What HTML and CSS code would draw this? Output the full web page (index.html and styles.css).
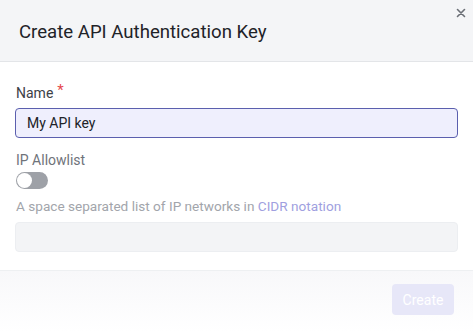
FILE: index.html
```html
<!DOCTYPE html>
<html>
<head>
<meta charset="utf-8">
<link rel="stylesheet" href="styles.css">
</head>
<body>
<div class="modal">
  <div class="modal-header">
    <h1 class="title">Create API Authentication Key</h1>
    <button class="close" aria-label="Close">
      <svg width="10" height="10" viewBox="0 0 10 10"><path d="M1.5 1.5L8.5 8.5M8.5 1.5L1.5 8.5" stroke="#6b6f76" stroke-width="1.6" stroke-linecap="round"/></svg>
    </button>
  </div>
  <div class="modal-body">
    <label class="label">Name<span class="req">*</span></label>
    <div class="input active">My API key</div>
    <label class="label muted">IP Allowlist</label>
    <div class="toggle"><span class="knob"></span></div>
    <p class="help">A space separated list of IP networks in <a class="link">CIDR notation</a></p>
    <div class="input disabled"></div>
  </div>
  <div class="modal-footer">
    <button class="btn">Create</button>
  </div>
</div>
</body>
</html>
```
FILE: styles.css
```css
* { box-sizing: border-box; }
html, body { margin: 0; padding: 0; background: #fff; }
body { font-family: Roboto, "Liberation Sans", sans-serif; width: 473px; height: 332px; overflow: hidden; }
.modal { display: flex; flex-direction: column; height: 332px; }
.modal-header {
  position: relative;
  height: 62px;
  background: #f4f5f7;
  border-bottom: 1px solid #e3e5e8;
  display: flex;
  align-items: center;
  padding-left: 19px;
}
.title { margin: 0; font-size: 18.6px; font-weight: 400; color: #1f2328; padding-top: 3px; }
.close {
  position: absolute; top: 6px; right: 5px;
  border: 0; background: transparent; padding: 2px; width: 14px; height: 14px;
  display: flex; align-items: center; justify-content: center;
}
.modal-body { padding: 22px 15px 18px 15px; display: flex; flex-direction: column; }
.label { display: block; font-size: 14px; color: #3d4147; line-height: 18px; padding-left: 1px; }
.req { color: #e5484d; font-size: 15px; margin-left: 4px; position: relative; top: -3px; }
.input {
  margin-top: 6px;
  height: 30px;
  border-radius: 4px;
  font-size: 14px;
  line-height: 28px;
  padding: 0 11px;
}
.input.active { background: #efeffd; border: 1px solid #5b5fae; color: #202328; }
.label.muted { color: #6f737a; margin-top: 13px; }
.toggle {
  margin-top: 3px; margin-left: 1px;
  width: 32px; height: 17px; border-radius: 9px; background: #9ea1a7;
  position: relative;
}
.knob {
  position: absolute; left: 1px; top: 1px; width: 15px; height: 15px; border-radius: 50%; background: #fff;
}
.help { margin: 8px 0 0 1px; font-size: 13.6px; color: #a2a5ab; line-height: 18px; }
.link { color: #a09fe0; text-decoration: none; }
.input.disabled { margin-top: 7px; background: #f3f4f6; border: 1px solid #eceef1; }
.modal-footer {
  flex: 1;
  border-top: 1px solid #eef0f2;
  background: linear-gradient(#f8f8fa, #ffffff);
  display: flex; justify-content: flex-end; align-items: flex-start;
  padding: 13px 19px 0 0;
}
.btn {
  font-family: Roboto, "Liberation Sans", sans-serif;
  width: 62px; height: 31px; border: 0; border-radius: 4px;
  background: #e7e7f8; color: #fff; font-size: 14px; padding: 0;
}
```
